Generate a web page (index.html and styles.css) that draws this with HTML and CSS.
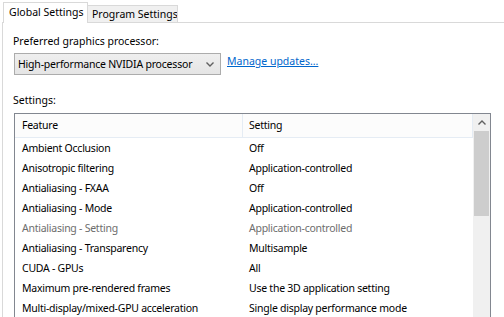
FILE: index.html
```html
<!DOCTYPE html>
<html>
<head>
<meta charset="utf-8">
<link rel="stylesheet" href="styles.css">
</head>
<body>
<div class="tabs">
  <div class="tab active">Global Settings</div>
  <div class="tab">Program Settings</div>
</div>
<div class="panel">
  <div class="label first">Preferred graphics processor:</div>
  <div class="gpu-row">
    <div class="select">
      <span>High-performance NVIDIA processor</span>
      <svg class="chev" width="8" height="5" viewBox="0 0 8 5"><path d="M0.5 0.5 L4 4 L7.5 0.5" fill="none" stroke="#606060" stroke-width="1.4"/></svg>
    </div>
    <a class="link" href="#">Manage updates...</a>
  </div>
  <div class="label settings">Settings:</div>
  <div class="listbox">
    <div class="list">
      <div class="row header">
        <div class="c1">Feature</div>
        <div class="c2">Setting</div>
      </div>
      <div class="row"><div class="c1">Ambient Occlusion</div><div class="c2">Off</div></div>
      <div class="row"><div class="c1">Anisotropic filtering</div><div class="c2">Application-controlled</div></div>
      <div class="row"><div class="c1">Antialiasing - FXAA</div><div class="c2">Off</div></div>
      <div class="row"><div class="c1">Antialiasing - Mode</div><div class="c2">Application-controlled</div></div>
      <div class="row disabled"><div class="c1">Antialiasing - Setting</div><div class="c2">Application-controlled</div></div>
      <div class="row"><div class="c1">Antialiasing - Transparency</div><div class="c2">Multisample</div></div>
      <div class="row"><div class="c1">CUDA - GPUs</div><div class="c2">All</div></div>
      <div class="row"><div class="c1">Maximum pre-rendered frames</div><div class="c2">Use the 3D application setting</div></div>
      <div class="row"><div class="c1">Multi-display/mixed-GPU acceleration</div><div class="c2">Single display performance mode</div></div>
    </div>
    <div class="scrollbar">
      <div class="sb-btn">
        <svg width="8" height="5" viewBox="0 0 8 5"><path d="M0.5 4.5 L4 1 L7.5 4.5" fill="none" stroke="#606060" stroke-width="1.4"/></svg>
      </div>
      <div class="thumb"></div>
    </div>
  </div>
</div>
</body>
</html>
```
FILE: styles.css
```css
html, body {
  margin: 0;
  padding: 0;
  background: #ffffff;
  overflow: hidden;
  height: 317px;
}
body {
  font-family: "Noto Sans", "Liberation Sans", sans-serif;
  font-size: 10.5px;
  color: #000000;
}
.tabs {
  display: flex;
  align-items: flex-end;
  padding-left: 3px;
  height: 22px;
}
.tab {
  box-sizing: border-box;
  border: 1px solid #d9d9d9;
  border-bottom: none;
  background: #f0f0f0;
  height: 17px;
  line-height: 16px;
  padding: 0 0 0 4px;
  width: 91px;
  margin-left: -1px;
  white-space: nowrap;
  overflow: hidden;
}
.tab.active {
  background: #ffffff;
  height: 21px;
  line-height: 19px;
  padding-left: 5px;
  width: 85px;
  margin-left: 0;
  margin-bottom: -1px;
  position: relative;
  z-index: 1;
}
.panel {
  border-top: 1px solid #d9d9d9;
  border-left: 1px solid #d9d9d9;
  margin-left: 2px;
  padding-left: 11px;
  height: 400px;
}
.label {
  margin-left: -1px;
  line-height: 15px;
  white-space: nowrap;
}
.label.first {
  margin-top: 11px;
}
.gpu-row {
  display: flex;
  align-items: center;
  margin-top: 4px;
  white-space: nowrap;
}
.select {
  box-sizing: border-box;
  width: 207px;
  height: 22px;
  border: 1px solid #acacac;
  background: linear-gradient(#efefef, #e5e5e5);
  display: flex;
  align-items: center;
  justify-content: space-between;
  padding: 0 6px 0 3px;
  white-space: nowrap;
  letter-spacing: -0.2px;
}
.chev {
  display: block;
  flex: none;
}
.link {
  color: #0066cc;
  text-decoration: underline;
  margin-left: 6px;
  margin-top: -6px;
}
.label.settings {
  margin-top: 18px;
}
.listbox {
  margin-top: 5px;
  width: 477px;
  box-sizing: border-box;
  border: 1px solid #828790;
  display: flex;
  align-items: flex-start;
}
.list {
  flex: 1;
  letter-spacing: -0.25px;
}
.row {
  display: flex;
  height: 20px;
  line-height: 20px;
}
.row .c1 {
  width: 228px;
  padding-left: 7px;
  box-sizing: border-box;
  white-space: nowrap;
}
.row .c2 {
  flex: 1;
  padding-left: 6px;
  white-space: nowrap;
}
.row.header {
  height: 23px;
  line-height: 23px;
  background: #fcfcfc;
  border-bottom: 1px solid #e5ecf4;
  border-right: 1px solid #e5ecf4;
}
.row.header .c1 {
  border-right: 1px solid #e5ecf4;
}
.row.disabled {
  color: #6d6d6d;
}
.scrollbar {
  width: 17px;
  background: #f0f0f0;
  height: 220px;
  display: flex;
  flex-direction: column;
  align-items: center;
}
.sb-btn {
  height: 17px;
  width: 17px;
  display: flex;
  align-items: center;
  justify-content: center;
}
.sb-btn svg {
  display: block;
}
.thumb {
  width: 15px;
  height: 85px;
  background: #cdcdcd;
}
```
